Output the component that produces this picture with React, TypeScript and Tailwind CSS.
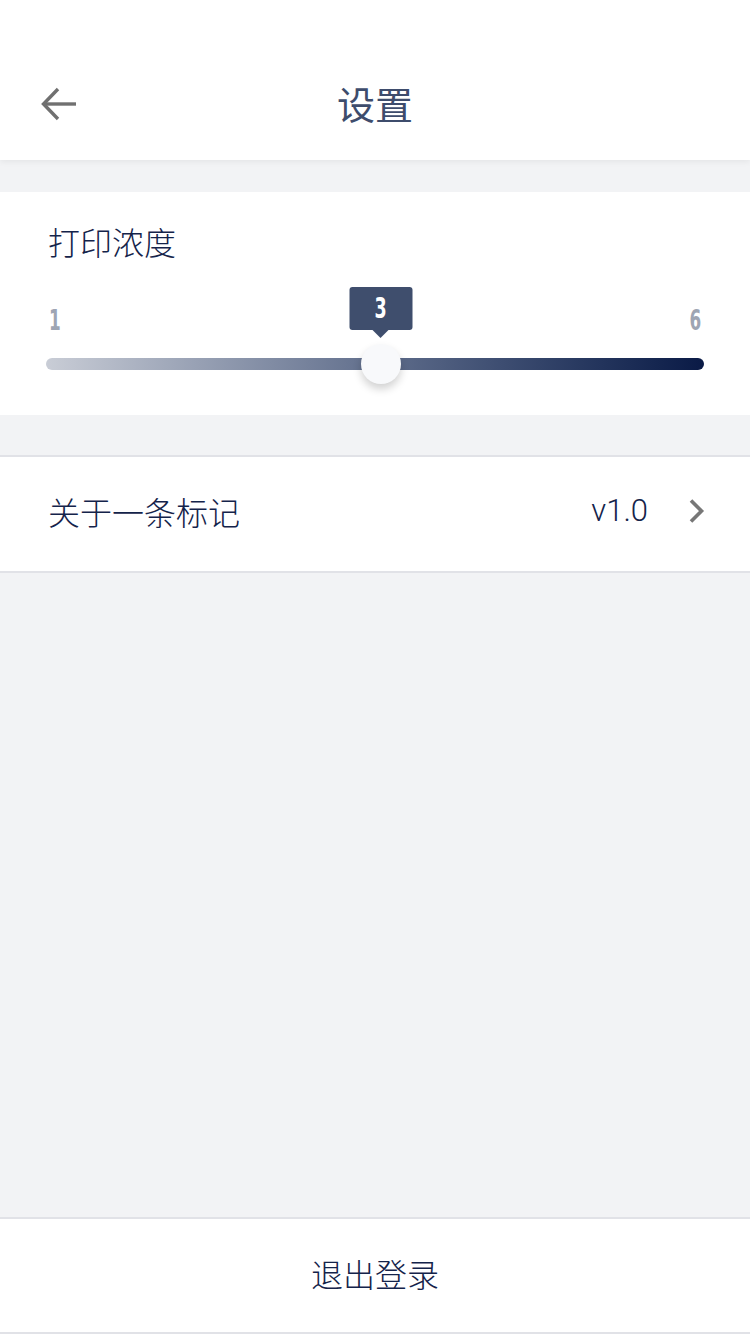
import React from "react";

const cjk = "font-['Noto_Sans_CJK_SC','Noto_Sans',sans-serif]";
const narrow = "font-['DejaVu_Sans',sans-serif] font-stretch-condensed";

const Header: React.FC = () => (
  <div className="bg-white pt-12 shadow-[0_2px_6px_rgba(0,0,0,0.06)] relative z-10">
    <div className="h-[112px] flex items-center justify-center relative">
      <svg
        className="absolute left-[40px] top-[38px]"
        width="38"
        height="36"
        viewBox="0 0 38 36"
        fill="none"
        stroke="#707070"
        strokeWidth="3.4"
      >
        <path d="M36 18H4" />
        <path d="M18 3L3.5 18L18 33" />
      </svg>
      <h1 className={`${cjk} text-[38px] text-[#3e4c6c] font-normal -mt-[4px]`}>设置</h1>
    </div>
  </div>
);

const DensitySlider: React.FC = () => {
  const value = 3;
  // thumb sits a bit past the middle of the track in the design
  const pct = 50.9;
  return (
    <div className="bg-white mt-8 px-[48px] pt-[27px] pb-[45px]">
      <p className={`${cjk} text-[32px] text-[#14234a] font-light leading-[44px]`}>打印浓度</p>
      <div className={`flex justify-between items-end mt-[44px] px-[1px] ${narrow} text-[26px] font-bold text-[#9ea5b3] leading-none`}>
        <span className="inline-block scale-x-[0.72] scale-y-[1.1] origin-left">1</span>
        <span className="inline-block scale-x-[0.72] scale-y-[1.1] origin-right">6</span>
      </div>
      <div className="relative mt-[25px] h-[12px] -mx-[2px] rounded-full bg-gradient-to-r from-[#c9cdd6] to-[#0a1a46]">
        <div
          className="absolute top-1/2 -translate-x-1/2 -translate-y-1/2 w-[40px] h-[40px] rounded-full bg-[#f8f9fb] shadow-[0_5px_9px_rgba(0,0,0,0.18)]"
          style={{ left: `${pct}%` }}
        />
        <div
          className="absolute bottom-[32px] -translate-x-1/2 flex flex-col items-center"
          style={{ left: `${pct}%` }}
        >
          <div className={`w-[63px] h-[43px] rounded-[3px] bg-[#3f4e6d] flex items-center justify-center text-white text-[26px] font-bold ${narrow}`}>
            <span className="inline-block scale-x-[0.75] scale-y-[1.1]">{value}</span>
          </div>
          <div className="w-0 h-0 border-x-[8px] border-x-transparent border-t-[8px] border-t-[#3f4e6d]" />
        </div>
      </div>
    </div>
  );
};

const App: React.FC = () => {
  return (
    <div className="w-[750px] h-[1334px] flex flex-col bg-[#f2f3f5] overflow-hidden">
      <Header />
      <DensitySlider />
      <div className="mt-[40px] bg-white border-y-2 border-[#e1e2e7] h-[118px] flex items-center px-[48px] pb-[6px]">
        <span className={`${cjk} text-[32px] text-[#14234a] font-light flex-1`}>关于一条标记</span>
        <span className="font-['Roboto','Liberation_Sans',sans-serif] text-[31px] text-[#14234a] font-light mr-[40px]">v1.0</span>
        <svg width="18" height="26" viewBox="0 0 18 26" fill="none" stroke="#777" strokeWidth="3.6" className="mr-[-4px]">
          <path d="M3 2.5L13.5 13L3 23.5" />
        </svg>
      </div>
      <div className="flex-1" />
      <div className="bg-white border-y-2 border-[#e1e2e7] h-[117px] flex items-center justify-center pb-[5px]">
        <span className={`${cjk} text-[32px] text-[#14234a] font-light`}>退出登录</span>
      </div>
    </div>
  );
};

export default App;
